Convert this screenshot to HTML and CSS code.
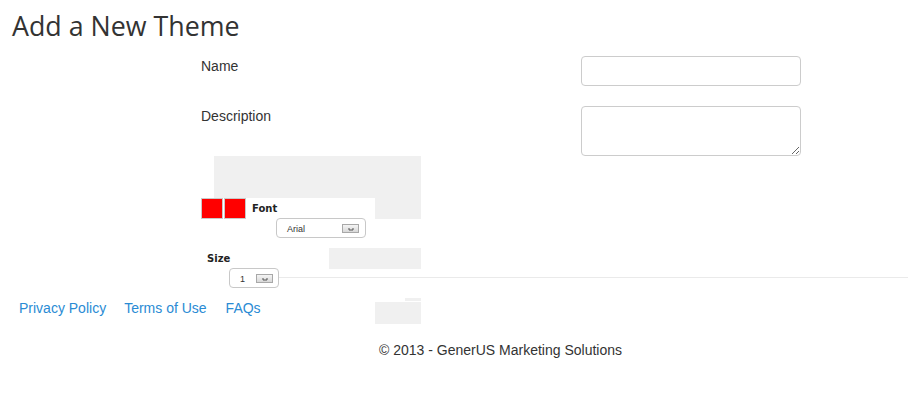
FILE: index.html
```html
<!DOCTYPE html>
<html>
<head>
<meta charset="utf-8">
<title>Add a New Theme</title>
<link rel="stylesheet" href="styles.css">
</head>
<body>
<h1 class="page-title">Add a New Theme</h1>
<form class="theme-form">
  <label class="field-label" for="name">Name</label>
  <input class="field-input" id="name" type="text">
  <label class="field-label" for="desc">Description</label>
  <textarea class="field-area" id="desc"></textarea>
</form>
<div class="editor">
  <div class="shade shade-top"></div>
  <div class="toolbar-panel"></div>
  <span class="swatch swatch-a"></span>
  <span class="swatch swatch-b"></span>
  <span class="tool-label font-label">Font</span>
  <div class="mini-select font-select">
    <span class="mini-text">Arial</span>
    <span class="mini-btn"><svg width="14" height="7" viewBox="0 0 14 7"><path d="M5 3v2h4v-2" fill="none" stroke="#555" stroke-width="1"/></svg></span>
  </div>
  <span class="tool-label size-label">Size</span>
  <div class="shade shade-mid"></div>
  <div class="mini-select size-select">
    <span class="mini-text">1</span>
    <span class="mini-btn"><svg width="14" height="7" viewBox="0 0 14 7"><path d="M5 3v2h4v-2" fill="none" stroke="#555" stroke-width="1"/></svg></span>
  </div>
  <div class="shade shade-low"></div>
  <div class="shade shade-strip"></div>
</div>
<hr class="rule">
<footer class="site-footer">
  <nav class="footer-links">
    <a href="#">Privacy Policy</a>
    <a href="#">Terms of Use</a>
    <a href="#">FAQs</a>
  </nav>
  <p class="copyright">© 2013 - GenerUS Marketing Solutions</p>
</footer>
</body>
</html>
```
FILE: styles.css
```css
html, body {
  margin: 0;
  padding: 0;
  background: #fff;
}
body {
  width: 910px;
  font-family: "Liberation Sans", Arial, sans-serif;
  font-size: 14px;
  color: #333;
}
.page-title {
  margin: 0 0 10px;
  padding: 6px 12px 0;
  font-family: "Open Sans", "Noto Sans", sans-serif;
  font-weight: 400;
  font-size: 26.8px;
  line-height: 40px;
  color: #333;
}
.theme-form {
  display: grid;
  grid-template-columns: 380px 220px;
  row-gap: 20px;
  padding-left: 201px;
}
.field-label {
  padding-top: 0;
  line-height: 20px;
}
.field-input, .field-area {
  box-sizing: border-box;
  width: 220px;
  border: 1px solid #ccc;
  border-radius: 4px;
  background: #fff;
  margin: 0;
  font: inherit;
}
.field-input { height: 30px; }
.field-area { height: 50px; resize: vertical; display: block; }
.editor {
  position: relative;
  height: 121px;
}
.shade {
  position: absolute;
  background: #f0f0f0;
}
.shade-top { left: 214px; top: 0; width: 207px; height: 63px; }
.shade-mid { left: 329px; top: 92px; width: 92px; height: 21px; }
.shade-low { left: 375px; top: 146px; width: 46px; height: 22px; }
.shade-strip { left: 405px; top: 142px; width: 16px; height: 3px; }
.toolbar-panel {
  position: absolute;
  left: 200px; top: 42px;
  width: 175px; height: 21px;
  background: #fff;
}
.swatch {
  position: absolute;
  top: 42px;
  width: 20px; height: 19px;
  background: #f00;
  border: 1px solid #c9c9c9;
}
.swatch-a { left: 201px; }
.swatch-b { left: 224px; }
.tool-label {
  position: absolute;
  font-family: "DejaVu Sans", Verdana, sans-serif;
  font-weight: 700;
  font-size: 10px;
  line-height: 13px;
  color: #222;
}
.font-label { left: 252px; top: 46px; }
.size-label { left: 207px; top: 96px; }
.mini-select {
  position: absolute;
  box-sizing: border-box;
  height: 20px;
  border: 1px solid #c8c8c8;
  border-radius: 4px;
  background: #fff;
  display: flex;
  align-items: center;
  font-family: "Liberation Sans", Arial, sans-serif;
  font-size: 9px;
  color: #333;
}
.font-select { left: 276px; top: 62px; width: 90px; padding-left: 10px; }
.size-select { left: 229px; top: 112px; width: 50px; padding-left: 10px; }
.mini-text { flex: 1; padding-top: 1px; }
.mini-btn {
  box-sizing: border-box;
  width: 17px; height: 9px;
  margin-right: 6px;
  border: 1px solid #a8a8a8;
  background: linear-gradient(#f4f4f4, #d8d8d8);
  display: flex;
  align-items: flex-end;
  justify-content: center;
}
.mini-btn svg { display: block; }
.size-select .mini-btn { margin-right: 5px; }
.rule {
  margin: 0 2px 0 279px;
  border: 0;
  border-top: 1px solid #eaeaea;
  height: 0;
}
.site-footer {
  padding-top: 20px;
}
.footer-links {
  display: flex;
  gap: 18px;
  padding-left: 19px;
  line-height: 20px;
}
.footer-links a {
  color: #2a8bd4;
  text-decoration: none;
}
.footer-links a + a + a { margin-left: 1px; }
.copyright {
  margin: 22px 0 0 91px;
  text-align: center;
  line-height: 20px;
}
```
